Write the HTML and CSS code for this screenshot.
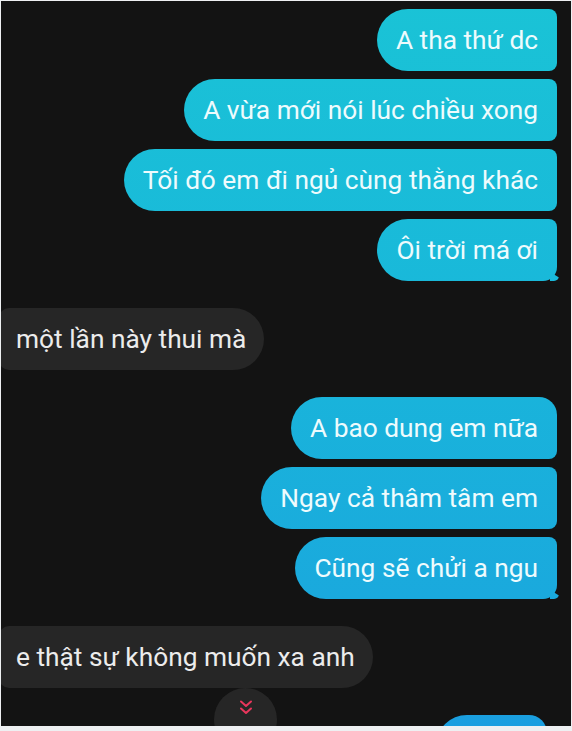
FILE: index.html
```html
<!DOCTYPE html>
<html lang="vi">
<head>
<meta charset="utf-8">
<link rel="stylesheet" href="styles.css">
</head>
<body>
<div class="screen">
  <div class="thread">
    <div class="row sent"><div class="bubble out">A tha thứ dc</div></div>
    <div class="row sent"><div class="bubble out">A vừa mới nói lúc chiều xong</div></div>
    <div class="row sent"><div class="bubble out">Tối đó em đi ngủ cùng thằng khác</div></div>
    <div class="row sent"><div class="bubble out last">Ôi trời má ơi</div></div>

    <div class="row recv group-gap"><div class="bubble in">một lần này thui mà</div></div>

    <div class="row sent group-gap"><div class="bubble out first">A bao dung em nữa</div></div>
    <div class="row sent"><div class="bubble out">Ngay cả thâm tâm em</div></div>
    <div class="row sent"><div class="bubble out last">Cũng sẽ chửi a ngu</div></div>

    <div class="row recv group-gap"><div class="bubble in">e thật sự không muốn xa anh</div></div>

    <div class="row sent group-gap"><div class="bubble out first partial">&nbsp;</div></div>
  </div>
  <button class="scroll-down" aria-label="Cuộn xuống">
    <svg width="14" height="18" viewBox="0 0 14 18" fill="none" stroke="#e8365c" stroke-width="2" stroke-linecap="round" stroke-linejoin="round">
      <path d="M2 2.5 L7 7 L12 2.5"/>
      <path d="M2 9.5 L7 14 L12 9.5"/>
    </svg>
  </button>
</div>
</body>
</html>
```
FILE: styles.css
```css
* { box-sizing: border-box; }
html, body {
  margin: 0;
  padding: 0;
  background: #eef0f2;
}
body {
  width: 572px;
  height: 731px;
  overflow: hidden;
  font-family: Roboto, "Noto Sans", "DejaVu Sans", sans-serif;
}
.screen {
  position: relative;
  margin: 1px 0 0 1px;
  width: 570px;
  height: 725px;
  background: #131313;
  overflow: hidden;
}
.thread {
  display: flex;
  flex-direction: column;
  gap: 8px;
  padding: 8px 14px 0 0;
}
.row { display: flex; }
.row.sent { justify-content: flex-end; }
.row.recv { justify-content: flex-start; }
.group-gap { margin-top: 19px; }
.bubble {
  height: 62px;
  display: flex;
  align-items: center;
  font-size: 26.3px;
  letter-spacing: 0;
  white-space: nowrap;
}
.bubble.out {
  padding: 0 19px 0 19px;
  color: #eefbfd;
  background: linear-gradient(to bottom, #1ac3d6 0px, #19b8da 300px, #1aa9dd 600px, #1a9ee0 731px) fixed;
  border-radius: 31px 8px 8px 31px;
  position: relative;
}
.bubble.out.first { border-radius: 31px 18px 8px 31px; }
.bubble.out.last { border-radius: 31px 8px 14px 31px; }
.bubble.out.last::after {
  content: "";
  position: absolute;
  right: -2px;
  bottom: 0;
  width: 9px;
  height: 9px;
  background: inherit;
  border-radius: 0 0 5px 0;
  clip-path: polygon(0 0, 100% 60%, 100% 100%, 0 100%);
}
.bubble.in {
  margin-left: -2px;
  padding: 0 18px 0 17px;
  color: #ececec;
  background: #262626;
  border-radius: 10px 31px 31px 10px;
}
.bubble.partial {
  width: 111px;
  margin-right: 10px;
}
.scroll-down {
  position: absolute;
  left: 213px;
  top: 687px;
  width: 63px;
  height: 63px;
  border: none;
  padding: 11px 0 0 0;
  border-radius: 50%;
  background: #262626;
  display: flex;
  justify-content: center;
  align-items: flex-start;
}
```
